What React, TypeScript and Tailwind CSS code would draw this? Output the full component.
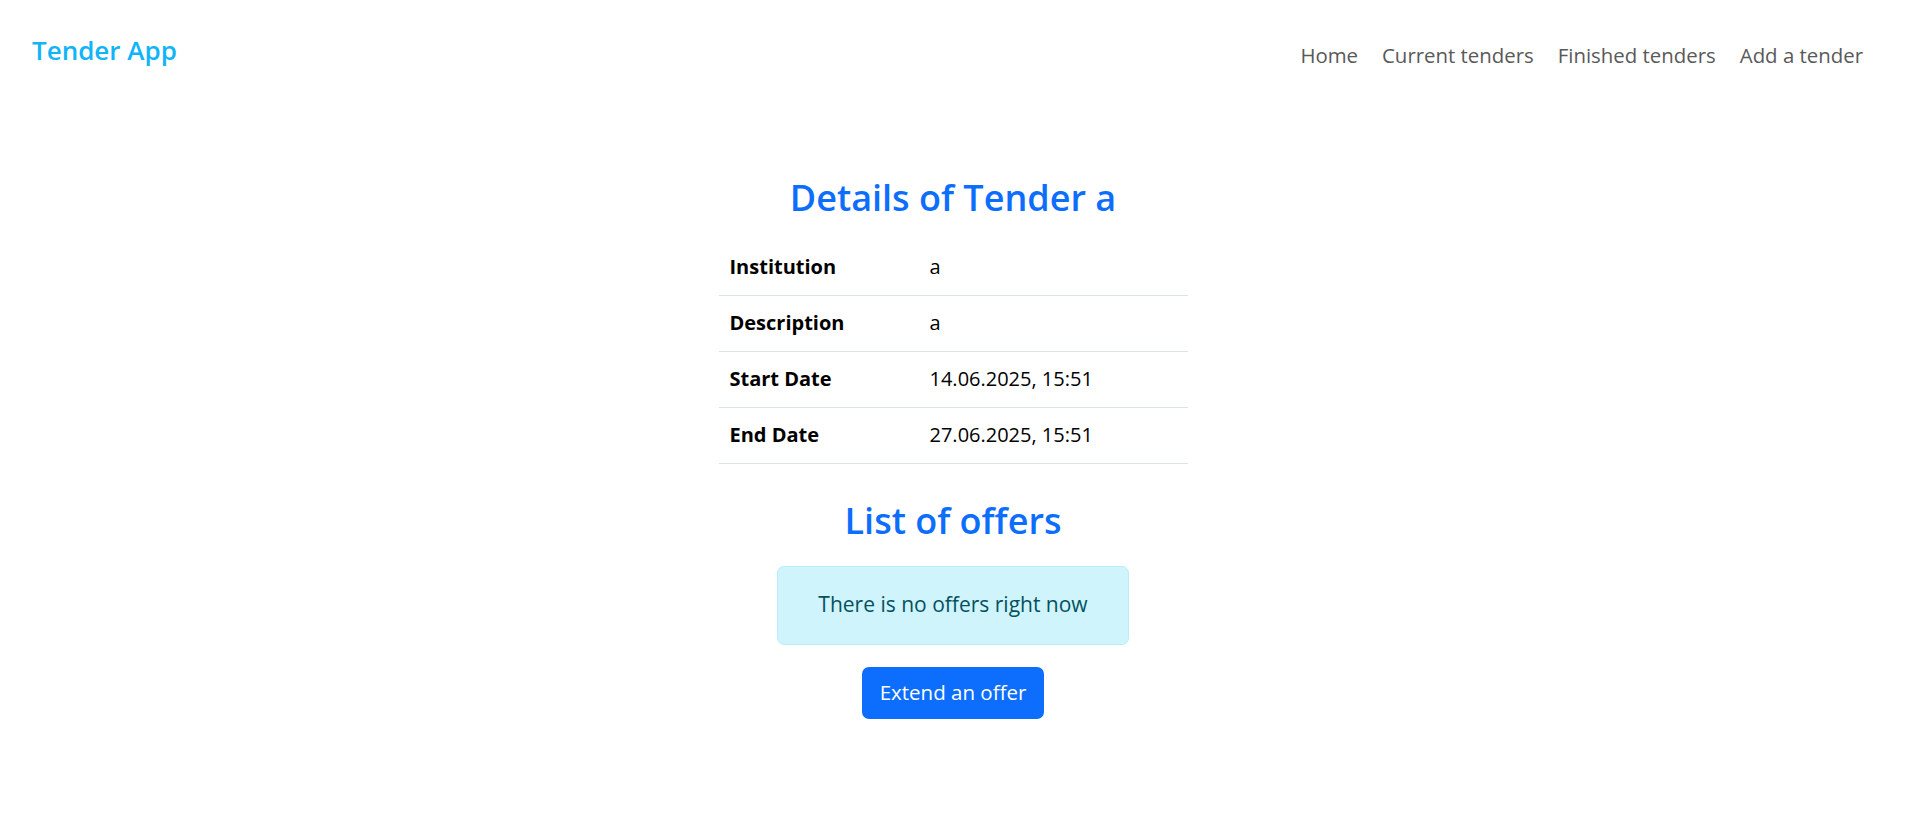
import React from 'react'

const font = { fontFamily: '"Open Sans", "Noto Sans", sans-serif' }

const rows = [
  { label: 'Institution', value: 'a' },
  { label: 'Description', value: 'a' },
  { label: 'Start Date', value: '14.06.2025, 15:51' },
  { label: 'End Date', value: '27.06.2025, 15:51' },
]

function Navbar() {
  const links = ['Home', 'Current tenders', 'Finished tenders', 'Add a tender']
  return (
    <nav className="flex items-start justify-between pl-[32px] pr-[49px]">
      <a className="mt-[30px] text-[26px] font-semibold leading-[40px] text-[#10b4f8]">Tender App</a>
      <ul className="mt-[35px] flex gap-[24px]">
        {links.map((l) => (
          <li key={l} className="text-[20.4px] leading-[40px] text-[#595959]">
            {l}
          </li>
        ))}
      </ul>
    </nav>
  )
}

export default function App() {
  return (
    <div className="min-h-screen bg-white text-black" style={font}>
      <Navbar />
      <main className="flex flex-col items-center pr-[6px]">
        <h2 className="mt-[101px] text-[36px] font-semibold leading-[44px] text-[#0d6efd]">Details of Tender a</h2>
        <table className="mt-[19px] w-[469px] border-collapse text-[20px]">
          <tbody>
            {rows.map((r) => (
              <tr key={r.label} className="h-[56px] border-b border-[#dee2e6]">
                <th className="w-[211px] px-[11px] text-left font-bold">{r.label}</th>
                <td className="px-0 text-left">{r.value}</td>
              </tr>
            ))}
          </tbody>
        </table>
        <h3 className="mt-[35px] text-[36px] font-semibold leading-[44px] text-[#0d6efd]">List of offers</h3>
        <div className="mt-[23px] flex h-[79px] w-[352px] items-center justify-center rounded-[7px] border border-[#b6effb] bg-[#cff4fc] text-[21px] text-[#055160]">
          There is no offers right now
        </div>
        <button className="mt-[22px] h-[52px] w-[182px] rounded-[7px] bg-[#0d6efd] text-[20.5px] text-white">
          Extend an offer
        </button>
      </main>
    </div>
  )
}
